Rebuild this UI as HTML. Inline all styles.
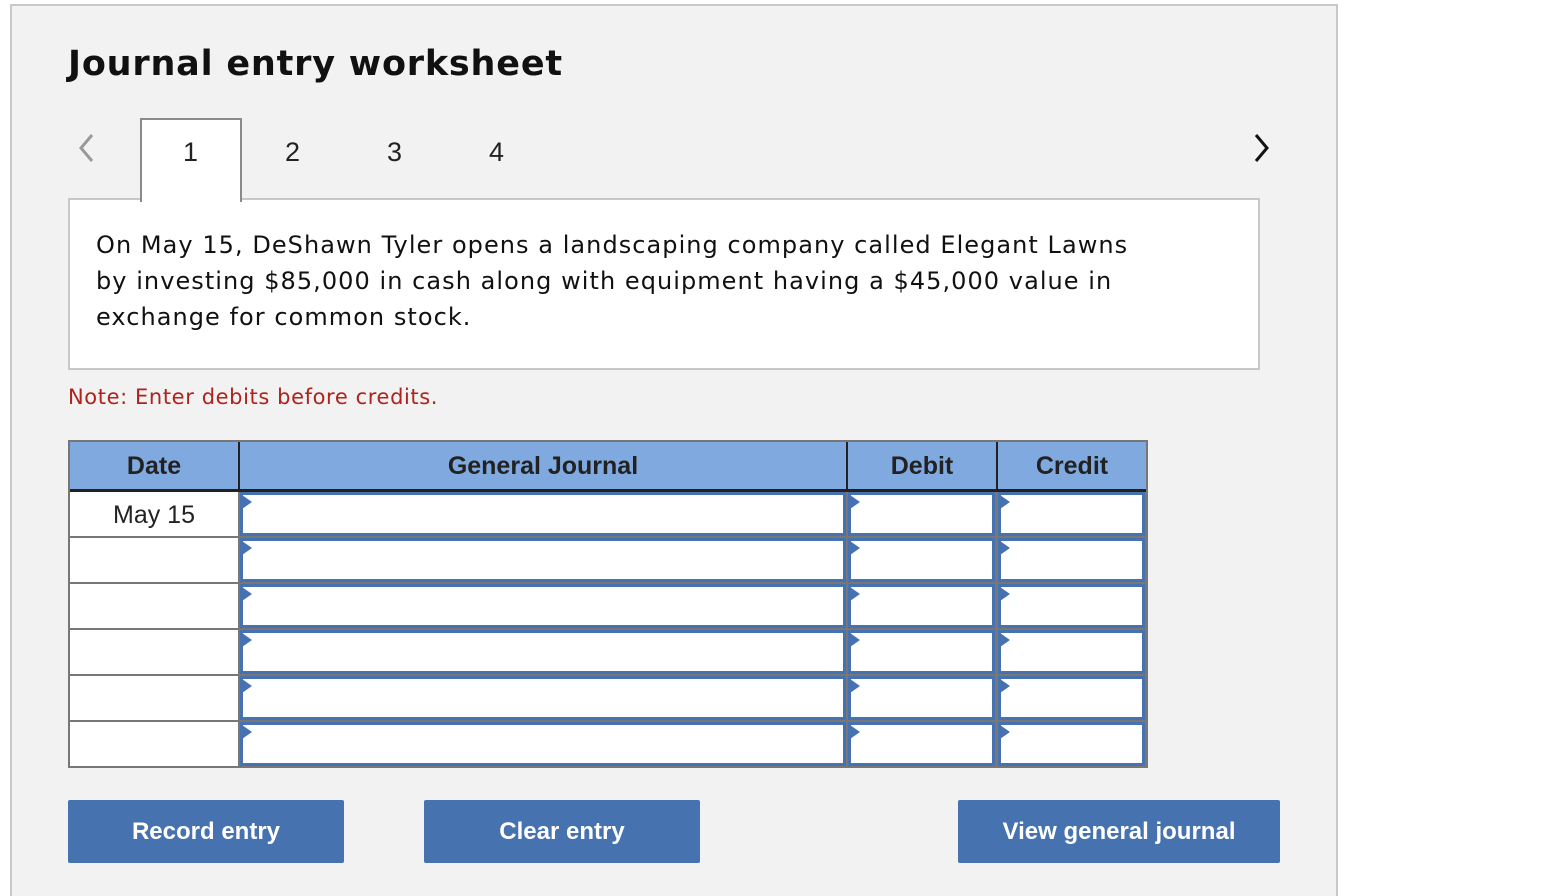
<!DOCTYPE html>
<html><head><style>
html,body{margin:0;width:1546px;height:896px;overflow:hidden}
body{background:#fff;font-family:"Liberation Sans",sans-serif;position:relative}
.abs{position:absolute}
.wrap{left:10px;top:4px;width:1324px;height:900px;background:#f2f2f2;border:2px solid #c8c8c8;border-bottom:none}
h1{position:absolute;left:68px;top:44px;margin:0;font-family:"DejaVu Sans",sans-serif;font-weight:bold;font-size:35px;color:#111;letter-spacing:0.8px}
.tab{font-size:27px;color:#222;top:137px}
.box{left:68px;top:198px;width:1188px;height:168px;background:#fff;border:2px solid #c8c8c8;box-sizing:content-box}
.txt{left:96px;top:227px;font-family:"DejaVu Sans",sans-serif;font-size:24px;line-height:36px;color:#111;letter-spacing:1.05px;white-space:nowrap}
.note{left:68px;top:385px;font-family:"DejaVu Sans",sans-serif;font-size:21px;color:#b0221c;letter-spacing:0.6px}
.th{top:442px;height:48px;background:#80aadf;font-weight:bold;font-size:25px;color:#222;text-align:center;line-height:48px}
.in{background:#fff;border:3px solid #4672b2;box-sizing:border-box}
.in:before{content:"";position:absolute;left:-1px;top:0;border-left:10px solid #4672b2;border-top:7px solid transparent;border-bottom:7px solid transparent}
.btn{top:800px;height:63px;background:#4672b0;color:#fff;font-weight:bold;font-size:24px;text-align:center;line-height:63px;border-radius:2px}
</style></head><body>
<div class="abs wrap"></div>
<h1>Journal entry worksheet</h1>
<svg class="abs" style="left:74px;top:132px" width="24" height="32"><path d="M18 3 L7 16 L18 29" stroke="#999" stroke-width="3" fill="none"/></svg>
<svg class="abs" style="left:1250px;top:132px" width="24" height="32"><path d="M6 3 L17 16 L6 29" stroke="#111" stroke-width="3" fill="none"/></svg>
<div class="abs box"></div>
<div class="abs" style="left:140px;top:118px;width:98px;height:82px;background:#fff;border:2px solid #8a8a8a;border-bottom:none;z-index:2"></div>
<div class="abs tab" style="left:183px;z-index:4">1</div>
<div class="abs tab" style="left:285px">2</div>
<div class="abs tab" style="left:387px">3</div>
<div class="abs tab" style="left:489px">4</div>
<div class="abs txt">On May 15, DeShawn Tyler opens a landscaping company called Elegant Lawns<br>by investing $85,000 in cash along with equipment having a $45,000 value in<br>exchange for common stock.</div>
<div class="abs note">Note: Enter debits before credits.</div>
<div class="abs" style="left:68px;top:440px;width:1080px;height:328px;background:#777"></div>
<div class="abs th" style="left:70px;width:168px">Date</div>
<div class="abs th" style="left:240px;width:606px">General Journal</div>
<div class="abs th" style="left:848px;width:148px">Debit</div>
<div class="abs th" style="left:998px;width:148px">Credit</div>
<div class="abs" style="left:70px;top:489px;width:1076px;height:3px;background:#222"></div>
<div class="abs" style="left:238px;top:442px;width:2px;height:48px;background:#222"></div>
<div class="abs" style="left:846px;top:442px;width:2px;height:48px;background:#222"></div>
<div class="abs" style="left:996px;top:442px;width:2px;height:48px;background:#222"></div>
<div id="rows"></div>
<script>
var tops=[492,538,584,630,676,722],h="";
tops.forEach(function(t,i){
h+='<div class="abs" style="left:70px;top:'+t+'px;width:168px;height:44px;background:#fff;text-align:center;line-height:46px;font-size:25px;color:#222">'+(i==0?'May 15':'')+'</div>';
h+='<div class="abs in" style="left:240px;top:'+t+'px;width:606px;height:44px"></div>';
h+='<div class="abs in" style="left:848px;top:'+t+'px;width:147px;height:44px"></div>';
h+='<div class="abs in" style="left:998px;top:'+t+'px;width:147px;height:44px"></div>';
});
document.getElementById('rows').innerHTML=h;
</script>
<div class="abs btn" style="left:68px;width:276px">Record entry</div>
<div class="abs btn" style="left:424px;width:276px">Clear entry</div>
<div class="abs btn" style="left:958px;width:322px">View general journal</div>
</body></html>
